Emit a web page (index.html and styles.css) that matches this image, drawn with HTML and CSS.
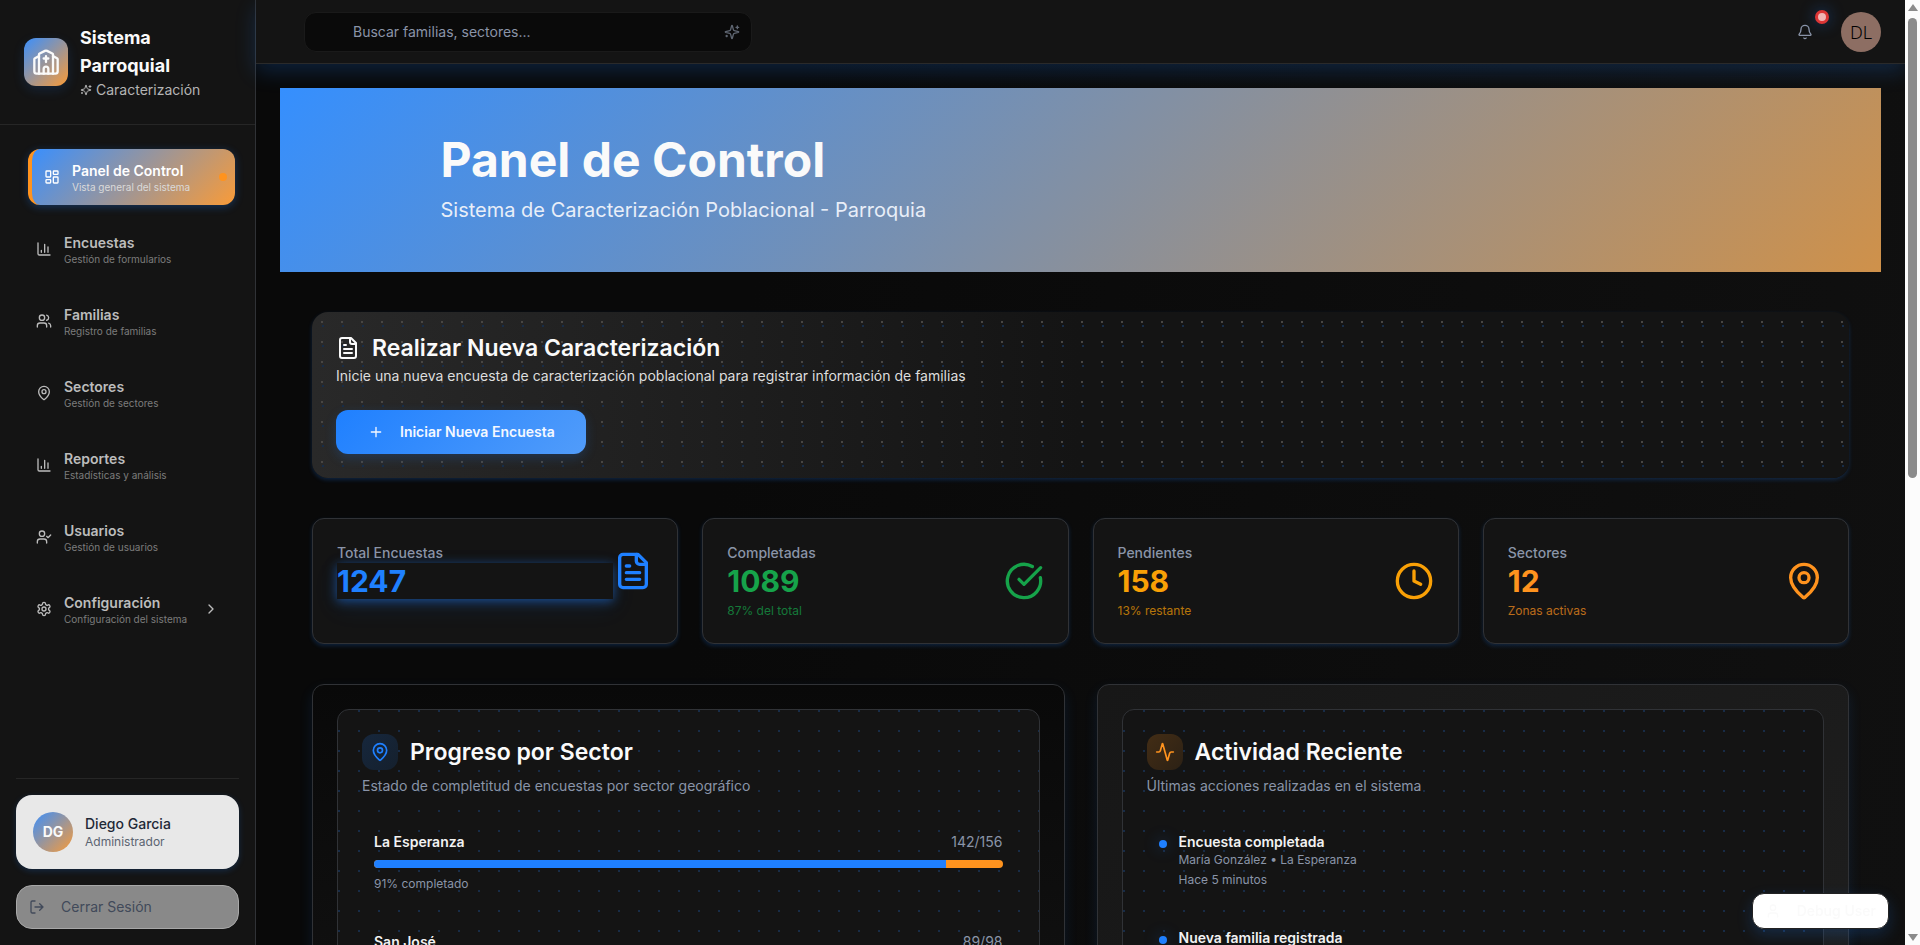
FILE: index.html
```html
<!DOCTYPE html>
<html lang="es">
<head>
<meta charset="utf-8">
<meta name="viewport" content="width=device-width, initial-scale=1">
<title>Sistema Parroquial - Panel de Control</title>
<link rel="stylesheet" href="styles.css">
</head>
<body>
<svg class="sprite" aria-hidden="true">
  <symbol id="sparkles" viewBox="0 0 24 24"><path d="M9.937 15.5A2 2 0 0 0 8.5 14.063l-6.135-1.582a.5.5 0 0 1 0-.962L8.5 9.936A2 2 0 0 0 9.937 8.5l1.582-6.135a.5.5 0 0 1 .963 0L14.063 8.5A2 2 0 0 0 15.5 9.937l6.135 1.581a.5.5 0 0 1 0 .964L15.5 14.063a2 2 0 0 0-1.437 1.437l-1.582 6.135a.5.5 0 0 1-.963 0z"/><path d="M20 3v4M22 5h-4M4 17v2M5 18H3"/></symbol>
  <symbol id="church" viewBox="0 0 24 24"><path d="M10 9h4M12 7v5"/><path d="M14 22v-4a2 2 0 0 0-4 0v4"/><path d="M18 22V5.618a1 1 0 0 0-.553-.894l-4.553-2.277a2 2 0 0 0-1.788 0L6.553 4.724A1 1 0 0 0 6 5.618V22"/><path d="m18 7 3.447 1.724a1 1 0 0 1 .553.894V20a2 2 0 0 1-2 2H4a2 2 0 0 1-2-2V9.618a1 1 0 0 1 .553-.894L6 7"/></symbol>
  <symbol id="dashboard" viewBox="0 0 24 24"><rect width="7" height="9" x="3" y="3" rx="1"/><rect width="7" height="5" x="14" y="3" rx="1"/><rect width="7" height="9" x="14" y="12" rx="1"/><rect width="7" height="5" x="3" y="16" rx="1"/></symbol>
  <symbol id="chart" viewBox="0 0 24 24"><path d="M3 3v16a2 2 0 0 0 2 2h16M18 17V9M13 17V5M8 17v-3"/></symbol>
  <symbol id="users" viewBox="0 0 24 24"><path d="M16 21v-2a4 4 0 0 0-4-4H6a4 4 0 0 0-4 4v2"/><circle cx="9" cy="7" r="4"/><path d="M22 21v-2a4 4 0 0 0-3-3.87M16 3.13a4 4 0 0 1 0 7.75"/></symbol>
  <symbol id="pin" viewBox="0 0 24 24"><path d="M20 10c0 4.993-5.539 10.193-7.399 11.799a1 1 0 0 1-1.202 0C9.539 20.193 4 14.993 4 10a8 8 0 0 1 16 0"/><circle cx="12" cy="10" r="3"/></symbol>
  <symbol id="user-check" viewBox="0 0 24 24"><path d="M16 21v-2a4 4 0 0 0-4-4H6a4 4 0 0 0-4 4v2"/><circle cx="9" cy="7" r="4"/><path d="m16 11 2 2 4-4"/></symbol>
  <symbol id="settings" viewBox="0 0 24 24"><path d="M12.22 2h-.44a2 2 0 0 0-2 2v.18a2 2 0 0 1-1 1.73l-.43.25a2 2 0 0 1-2 0l-.15-.08a2 2 0 0 0-2.73.73l-.22.38a2 2 0 0 0 .73 2.73l.15.1a2 2 0 0 1 1 1.72v.51a2 2 0 0 1-1 1.74l-.15.09a2 2 0 0 0-.73 2.73l.22.38a2 2 0 0 0 2.73.73l.15-.08a2 2 0 0 1 2 0l.43.25a2 2 0 0 1 1 1.73V20a2 2 0 0 0 2 2h.44a2 2 0 0 0 2-2v-.18a2 2 0 0 1 1-1.73l.43-.25a2 2 0 0 1 2 0l.15.08a2 2 0 0 0 2.73-.73l.22-.39a2 2 0 0 0-.73-2.73l-.15-.08a2 2 0 0 1-1-1.74v-.5a2 2 0 0 1 1-1.74l.15-.09a2 2 0 0 0 .73-2.73l-.22-.38a2 2 0 0 0-2.73-.73l-.15.08a2 2 0 0 1-2 0l-.43-.25a2 2 0 0 1-1-1.73V4a2 2 0 0 0-2-2z"/><circle cx="12" cy="12" r="3"/></symbol>
  <symbol id="chevron" viewBox="0 0 24 24"><path d="m9 18 6-6-6-6"/></symbol>
  <symbol id="logout" viewBox="0 0 24 24"><path d="M9 21H5a2 2 0 0 1-2-2V5a2 2 0 0 1 2-2h4M16 17l5-5-5-5M21 12H9"/></symbol>
  <symbol id="bell" viewBox="0 0 24 24"><path d="M10.268 21a2 2 0 0 0 3.464 0"/><path d="M3.262 15.326A1 1 0 0 0 4 17h16a1 1 0 0 0 .74-1.673C19.41 13.956 18 12.499 18 8A6 6 0 0 0 6 8c0 4.499-1.411 5.956-2.738 7.326"/></symbol>
  <symbol id="file" viewBox="0 0 24 24"><path d="M15 2H6a2 2 0 0 0-2 2v16a2 2 0 0 0 2 2h12a2 2 0 0 0 2-2V7Z"/><path d="M14 2v4a2 2 0 0 0 2 2h4M10 9H8M16 13H8M16 17H8"/></symbol>
  <symbol id="plus" viewBox="0 0 24 24"><path d="M5 12h14M12 5v14"/></symbol>
  <symbol id="check" viewBox="0 0 24 24"><path d="M21.801 10A10 10 0 1 1 17 3.335"/><path d="m9 11 3 3L22 4"/></symbol>
  <symbol id="clock" viewBox="0 0 24 24"><circle cx="12" cy="12" r="10"/><path d="M12 6v6l4 2"/></symbol>
  <symbol id="activity" viewBox="0 0 24 24"><path d="M22 12h-2.48a2 2 0 0 0-1.93 1.46l-2.35 8.36a.25.25 0 0 1-.48 0L9.24 2.18a.25.25 0 0 0-.48 0l-2.35 8.36A2 2 0 0 1 4.49 12H2"/></symbol>
  <symbol id="user" viewBox="0 0 24 24"><path d="M19 21v-2a4 4 0 0 0-4-4H9a4 4 0 0 0-4 4v2"/><circle cx="12" cy="7" r="4"/></symbol>
</svg>

<div class="app">
  <aside class="sidebar">
    <div class="brand">
      <div class="brand-logo"><svg class="icon icon-28"><use href="#church"/></svg></div>
      <div>
        <h2 class="brand-name">Sistema Parroquial</h2>
        <p class="brand-sub"><svg class="icon icon-12"><use href="#sparkles"/></svg>Caracterización</p>
      </div>
    </div>

    <nav class="nav">
      <a class="nav-item nav-item-active" href="#panel"><svg class="icon icon-16"><use href="#dashboard"/></svg><span class="nav-text"><span class="nav-title">Panel de Control</span><span class="nav-sub">Vista general del sistema</span></span><span class="nav-dot"></span></a>
      <a class="nav-item" href="#encuestas"><svg class="icon icon-16"><use href="#chart"/></svg><span class="nav-text"><span class="nav-title">Encuestas</span><span class="nav-sub">Gestión de formularios</span></span></a>
      <a class="nav-item" href="#familias"><svg class="icon icon-16"><use href="#users"/></svg><span class="nav-text"><span class="nav-title">Familias</span><span class="nav-sub">Registro de familias</span></span></a>
      <a class="nav-item" href="#sectores"><svg class="icon icon-16"><use href="#pin"/></svg><span class="nav-text"><span class="nav-title">Sectores</span><span class="nav-sub">Gestión de sectores</span></span></a>
      <a class="nav-item" href="#reportes"><svg class="icon icon-16"><use href="#chart"/></svg><span class="nav-text"><span class="nav-title">Reportes</span><span class="nav-sub">Estadísticas y análisis</span></span></a>
      <a class="nav-item" href="#usuarios"><svg class="icon icon-16"><use href="#user-check"/></svg><span class="nav-text"><span class="nav-title">Usuarios</span><span class="nav-sub">Gestión de usuarios</span></span></a>
      <a class="nav-item" href="#configuracion"><svg class="icon icon-16"><use href="#settings"/></svg><span class="nav-text"><span class="nav-title">Configuración</span><span class="nav-sub">Configuración del sistema</span></span><svg class="icon icon-16"><use href="#chevron"/></svg></a>
    </nav>

    <div class="account">
      <div class="account-card">
        <span class="account-avatar">DG</span>
        <div>
          <p class="account-name">Diego Garcia</p>
          <p class="account-role">Administrador</p>
        </div>
      </div>
      <button class="logout" type="button"><svg class="icon icon-16"><use href="#logout"/></svg>Cerrar Sesión</button>
    </div>
  </aside>

  <div class="page">
    <header class="topbar">
      <div class="search">
        <input class="search-input" type="text" placeholder="Buscar familias, sectores..." aria-label="Buscar">
        <svg class="icon icon-16"><use href="#sparkles"/></svg>
      </div>
      <div class="topbar-actions">
        <button class="bell" type="button" aria-label="Notificaciones"><svg class="icon icon-16"><use href="#bell"/></svg><span class="bell-badge"></span></button>
        <button class="profile" type="button" aria-label="Perfil">DL</button>
      </div>
    </header>

    <main class="main">
      <section class="banner">
        <div class="banner-inner">
          <h1 class="banner-title">Panel de Control</h1>
          <p class="banner-sub">Sistema de Caracterización Poblacional - Parroquia</p>
        </div>
      </section>

      <div class="content">
        <section class="cta">
          <h2 class="cta-title"><svg class="icon icon-24"><use href="#file"/></svg>Realizar Nueva Caracterización</h2>
          <p class="cta-text">Inicie una nueva encuesta de caracterización poblacional para registrar información de familias</p>
          <button class="cta-button" type="button"><svg class="icon icon-16"><use href="#plus"/></svg>Iniciar Nueva Encuesta</button>
        </section>

        <section class="stats">
          <article class="stat stat-blue">
            <div class="stat-row">
              <div class="stat-body"><p class="stat-label">Total Encuestas</p><p class="stat-value stat-value-glow">1247</p></div>
              <svg class="icon icon-40"><use href="#file"/></svg>
            </div>
          </article>
          <article class="stat stat-green">
            <div class="stat-row">
              <div class="stat-body"><p class="stat-label">Completadas</p><p class="stat-value">1089</p><p class="stat-note">87% del total</p></div>
              <svg class="icon icon-40"><use href="#check"/></svg>
            </div>
          </article>
          <article class="stat stat-amber">
            <div class="stat-row">
              <div class="stat-body"><p class="stat-label">Pendientes</p><p class="stat-value">158</p><p class="stat-note">13% restante</p></div>
              <svg class="icon icon-40"><use href="#clock"/></svg>
            </div>
          </article>
          <article class="stat stat-orange">
            <div class="stat-row">
              <div class="stat-body"><p class="stat-label">Sectores</p><p class="stat-value">12</p><p class="stat-note">Zonas activas</p></div>
              <svg class="icon icon-40"><use href="#pin"/></svg>
            </div>
          </article>
        </section>

        <section class="panels">
          <div class="panel">
            <div class="panel-inner">
              <h3 class="panel-title"><span class="panel-icon panel-icon-blue"><svg class="icon icon-20"><use href="#pin"/></svg></span>Progreso por Sector</h3>
              <p class="panel-sub">Estado de completitud de encuestas por sector geográfico</p>
              <div class="list">
                <div class="sector">
                  <div class="sector-head"><span class="item-title">La Esperanza</span><span class="sector-count">142/156</span></div>
                  <div class="bar"><div class="bar-fill" style="width:91%"></div></div>
                  <p class="note">91% completado</p>
                </div>
                <div class="sector">
                  <div class="sector-head"><span class="item-title">San José</span><span class="sector-count">89/98</span></div>
                  <div class="bar"><div class="bar-fill" style="width:91%"></div></div>
                </div>
              </div>
            </div>
          </div>

          <div class="panel panel-raised">
            <div class="panel-inner">
              <h3 class="panel-title"><span class="panel-icon panel-icon-orange"><svg class="icon icon-20"><use href="#activity"/></svg></span>Actividad Reciente</h3>
              <p class="panel-sub">Últimas acciones realizadas en el sistema</p>
              <div class="list">
                <div class="event">
                  <span class="event-dot"></span>
                  <div><p class="item-title">Encuesta completada</p><p class="note">María González • La Esperanza</p><p class="note note-time">Hace 5 minutos</p></div>
                </div>
                <div class="event">
                  <span class="event-dot"></span>
                  <div><p class="item-title">Nueva familia registrada</p></div>
                </div>
              </div>
            </div>
          </div>
        </section>
      </div>
    </main>
  </div>

  <div class="scrollbar" aria-hidden="true">
    <svg class="scroll-arrow" viewBox="0 0 10 8"><path d="M5 0 10 7H0z"/></svg>
    <div class="scroll-track"><div class="scroll-thumb"></div></div>
    <svg class="scroll-arrow" viewBox="0 0 10 8"><path d="M0 1h10L5 8z"/></svg>
  </div>

  <button class="debug" type="button"><svg class="icon icon-16"><use href="#user"/></svg>Debug User</button>
</div>
</body>
</html>
```

FILE: styles.css
```css
* { box-sizing: border-box; margin: 0; }

:root {
  --bg: #0a0a0a;
  --card: #141414;
  --line: #303236;
  --blue: #1f80ff;
  --orange: #ff931e;
  --muted: #8a94a8;
}

body {
  background: var(--bg);
  color: #fafafa;
  font: 14px/20px Inter, "Liberation Sans", sans-serif;
}

button { font: inherit; border: 0; padding: 0; }
a { color: inherit; text-decoration: none; }

.sprite { display: none; }
.icon { fill: none; stroke: currentColor; stroke-width: 2; stroke-linecap: round; stroke-linejoin: round; flex: none; }
.icon-12 { width: 12px; height: 12px; }
.icon-16 { width: 16px; height: 16px; }
.icon-20 { width: 20px; height: 20px; }
.icon-24 { width: 24px; height: 24px; }
.icon-28 { width: 28px; height: 28px; }
.icon-40 { width: 40px; height: 40px; }

.app { display: flex; height: 100vh; overflow: hidden; }

/* Sidebar */
.sidebar {
  flex: none;
  width: 256px;
  display: flex;
  flex-direction: column;
  background: var(--card);
  border-right: 1px solid var(--line);
  box-shadow: 0 8px 24px rgba(31, 128, 255, .08);
}
.brand { display: flex; align-items: center; gap: 12px; padding: 24px; border-bottom: 1px solid #262626; }
.brand-logo {
  flex: none;
  width: 44px;
  height: 48px;
  display: grid;
  place-items: center;
  border-radius: 12px;
  background: linear-gradient(135deg, #3a8ffd, #f99b38);
  box-shadow: 0 4px 12px rgba(31, 128, 255, .15);
}
.brand-name { font-size: 18px; line-height: 28px; font-weight: 700; }
.brand-sub { display: flex; align-items: center; gap: 4px; color: #b4b4b4; }

.nav { flex: 1; display: flex; flex-direction: column; gap: 16px; padding: 24px 20px 0 24px; }
.nav-item {
  display: flex;
  align-items: center;
  gap: 12px;
  height: 56px;
  margin-right: 4px;
  padding: 12px;
  border-radius: 12px;
  color: #bcbcbc;
}
.nav-item-active {
  margin: 0 0 0 4px;
  padding-right: 8px;
  border-left: 4px solid var(--orange);
  background: linear-gradient(135deg, #3a8ffd, #f99b38);
  box-shadow: 0 2px 8px rgba(31, 128, 255, .3);
  color: #fff;
}
.nav-text { flex: 1; display: flex; flex-direction: column; white-space: nowrap; }
.nav-title { font-weight: 600; }
.nav-sub { font-size: 10px; line-height: 12px; color: #7c7c7c; }
.nav-item-active .nav-sub { color: #dadada; }
.nav-dot { width: 8px; height: 8px; border-radius: 50%; background: var(--orange); }

.account { display: flex; flex-direction: column; gap: 16px; margin: 0 16px 16px; padding-top: 16px; border-top: 1px solid #262626; }
.account-card {
  display: flex;
  align-items: center;
  gap: 12px;
  padding: 17px;
  border-radius: 16px;
  background: #e8e8e8;
  box-shadow: 0 2px 6px rgba(31, 128, 255, .2);
}
.account-avatar {
  width: 40px;
  height: 40px;
  display: grid;
  place-items: center;
  border-radius: 50%;
  background: linear-gradient(135deg, #3a8ffd, #f99b38);
  font-weight: 700;
}
.account-name { color: #1f2937; font-weight: 500; }
.account-role { color: #5b6471; font-size: 12px; line-height: 16px; }
.logout {
  display: flex;
  align-items: center;
  gap: 16px;
  height: 44px;
  padding: 0 12px;
  border: 1px solid #a8a8a8;
  border-radius: 16px;
  background: #898989;
  color: #414a5a;
}

/* Top bar */
.page { flex: 1; min-width: 0; display: flex; flex-direction: column; background: linear-gradient(100deg, #090909 30%, #101010); }
.topbar {
  flex: none;
  display: flex;
  align-items: center;
  justify-content: space-between;
  height: 64px;
  padding: 0 24px 0 48px;
  background: var(--card);
  border-bottom: 1px solid #2a2a2a;
  box-shadow: 0 8px 20px rgba(31, 128, 255, .2);
}
.search {
  display: flex;
  align-items: center;
  flex: 0 1 448px;
  height: 40px;
  padding: 0 11px 0 48px;
  border: 1px solid #1a1a1a;
  border-radius: 12px;
  background: #0a0a0a;
  color: #5f6672;
}
.search-input { flex: 1; min-width: 0; padding: 0; border: 0; outline: 0; background: none; color: #fafafa; font: inherit; }
.search-input::placeholder { color: var(--muted); opacity: 1; }
.topbar-actions { display: flex; align-items: center; gap: 16px; }
.bell { position: relative; width: 40px; height: 40px; display: grid; place-items: center; background: none; color: var(--muted); }
.bell-badge {
  position: absolute;
  top: -2px;
  right: -4px;
  width: 14px;
  height: 14px;
  border: 3px solid #dc3535;
  border-radius: 50%;
  background: #f2b5b5;
  box-shadow: 0 0 16px rgba(31, 128, 255, .4);
}
.profile { width: 40px; height: 40px; border-radius: 50%; background: #8d6e63; color: #000; font: 300 18px/40px "Noto Sans", sans-serif; }

/* Main */
.main { flex: 1; min-height: 0; overflow: hidden; padding: 24px; }
.banner { padding: 48px; background: linear-gradient(135deg, #358ffe, #cf914a); }
.banner-inner { max-width: 1280px; margin: 0 auto; }
.banner-title { margin-bottom: 12px; font-size: 48px; line-height: 48px; font-weight: 700; }
.banner-sub { font-size: 20px; line-height: 28px; color: #e8eef8; }
.content { display: flex; flex-direction: column; gap: 40px; padding: 40px 32px; }

.cta {
  padding: 24px;
  border-radius: 16px;
  background:
    radial-gradient(circle at 1px 1px, #484644 1px, transparent 0) 9px 9px / 20px 20px,
    radial-gradient(circle at 1px 1px, #182c47 1px, transparent 0) 10px 13px / 20px 20px,
    linear-gradient(to right, #292929, var(--card) 50%);
  box-shadow: 0 2px 4px rgba(31, 128, 255, .22);
}
.cta-title { display: flex; align-items: center; gap: 12px; margin-bottom: 6px; font-size: 23px; line-height: 24px; font-weight: 600; }
.cta-text { margin-bottom: 24px; color: #dedede; }
.cta-button {
  display: flex;
  align-items: center;
  gap: 16px;
  height: 44px;
  padding: 0 31px 0 32px;
  border-radius: 12px;
  background: linear-gradient(135deg, var(--blue), #519cfa);
  box-shadow: 0 4px 12px rgba(31, 128, 255, .2);
  color: #f4f8ff;
  font-weight: 600;
}

.stats { display: grid; grid-template-columns: repeat(4, 1fr); gap: 24px; }
.stat {
  padding: 24px;
  border: 1px solid var(--line);
  border-radius: 12px;
  background: var(--card);
  box-shadow: 0 2px 4px rgba(31, 128, 255, .2);
}
.stat-row { display: flex; align-items: center; }
.stat-body { flex: 1; }
.stat-label { color: var(--muted); font-weight: 500; }
.stat-value { font-size: 30px; line-height: 36px; font-weight: 700; }
.stat-value-glow { background: var(--card); box-shadow: 0 2px 10px rgba(31, 128, 255, .5), 0 8px 24px rgba(31, 128, 255, .1); }
.stat-note { margin-top: 4px; font-size: 12px; line-height: 16px; opacity: .7; }
.stat-blue { color: var(--blue); }
.stat-green { color: #16a34a; }
.stat-amber { color: #f9a006; }
.stat-orange { color: var(--orange); }

.panels { display: grid; grid-template-columns: 1fr 1fr; gap: 32px; }
.panel {
  padding: 24px;
  border: 1px solid var(--line);
  border-radius: 12px;
  background: linear-gradient(to bottom, #090909, #161616);
  box-shadow: 0 6px 14px rgba(31, 128, 255, .12);
}
.panel-raised { background: linear-gradient(135deg, #171717, #1f1f1f); }
.panel-inner {
  min-height: 480px;
  padding: 24px;
  border: 1px solid var(--line);
  border-radius: 12px;
  background: radial-gradient(circle at 1px 1px, #182c47 1px, transparent 0) 0 0 / 20px 20px, var(--card);
}
.panel-title { display: flex; align-items: center; gap: 12px; margin-bottom: 6px; font-size: 23px; line-height: 36px; font-weight: 600; }
.panel-icon { width: 36px; height: 36px; display: grid; place-items: center; border-radius: 12px; }
.panel-icon-blue { background: linear-gradient(135deg, #16273d, #15202d); color: var(--blue); }
.panel-icon-orange { background: linear-gradient(135deg, #432d15, #2c2115); color: var(--orange); }
.panel-sub { color: var(--muted); }
.list { display: flex; flex-direction: column; gap: 16px; padding-top: 24px; }
.sector { display: flex; flex-direction: column; gap: 8px; padding: 12px; }
.sector-head { display: flex; justify-content: space-between; }
.sector-count { color: var(--muted); }
.item-title { font-weight: 600; color: #f2f2f2; }
.bar { height: 8px; overflow: hidden; border-radius: 4px; background: var(--orange); }
.bar-fill { height: 100%; background: var(--blue); }
.note { color: var(--muted); font-size: 12px; line-height: 16px; }
.note-time { margin-top: 4px; }
.event { display: flex; gap: 12px; padding: 12px; }
.event-dot { width: 8px; height: 8px; margin-top: 8px; border-radius: 50%; background: var(--blue); box-shadow: 0 0 16px rgba(31, 128, 255, .4); }

/* Page scrollbar */
.scrollbar { flex: none; width: 15px; display: flex; flex-direction: column; align-items: center; gap: 6px; padding: 4px 0; background: #fcfcfc; }
.scroll-arrow { width: 10px; height: 8px; fill: #8b8b8b; }
.scroll-track { flex: 1; }
.scroll-thumb { width: 9px; height: 460px; border-radius: 5px; background: #8b8b8b; }

.debug {
  position: fixed;
  right: 31px;
  bottom: 16px;
  display: flex;
  align-items: center;
  gap: 16px;
  height: 36px;
  padding: 0 12px;
  border: 1px solid #222;
  border-radius: 12px;
  background: #fff;
  box-shadow: 0 6px 16px rgba(31, 128, 255, .2);
  color: #fafafa;
  font-weight: 500;
}
```
